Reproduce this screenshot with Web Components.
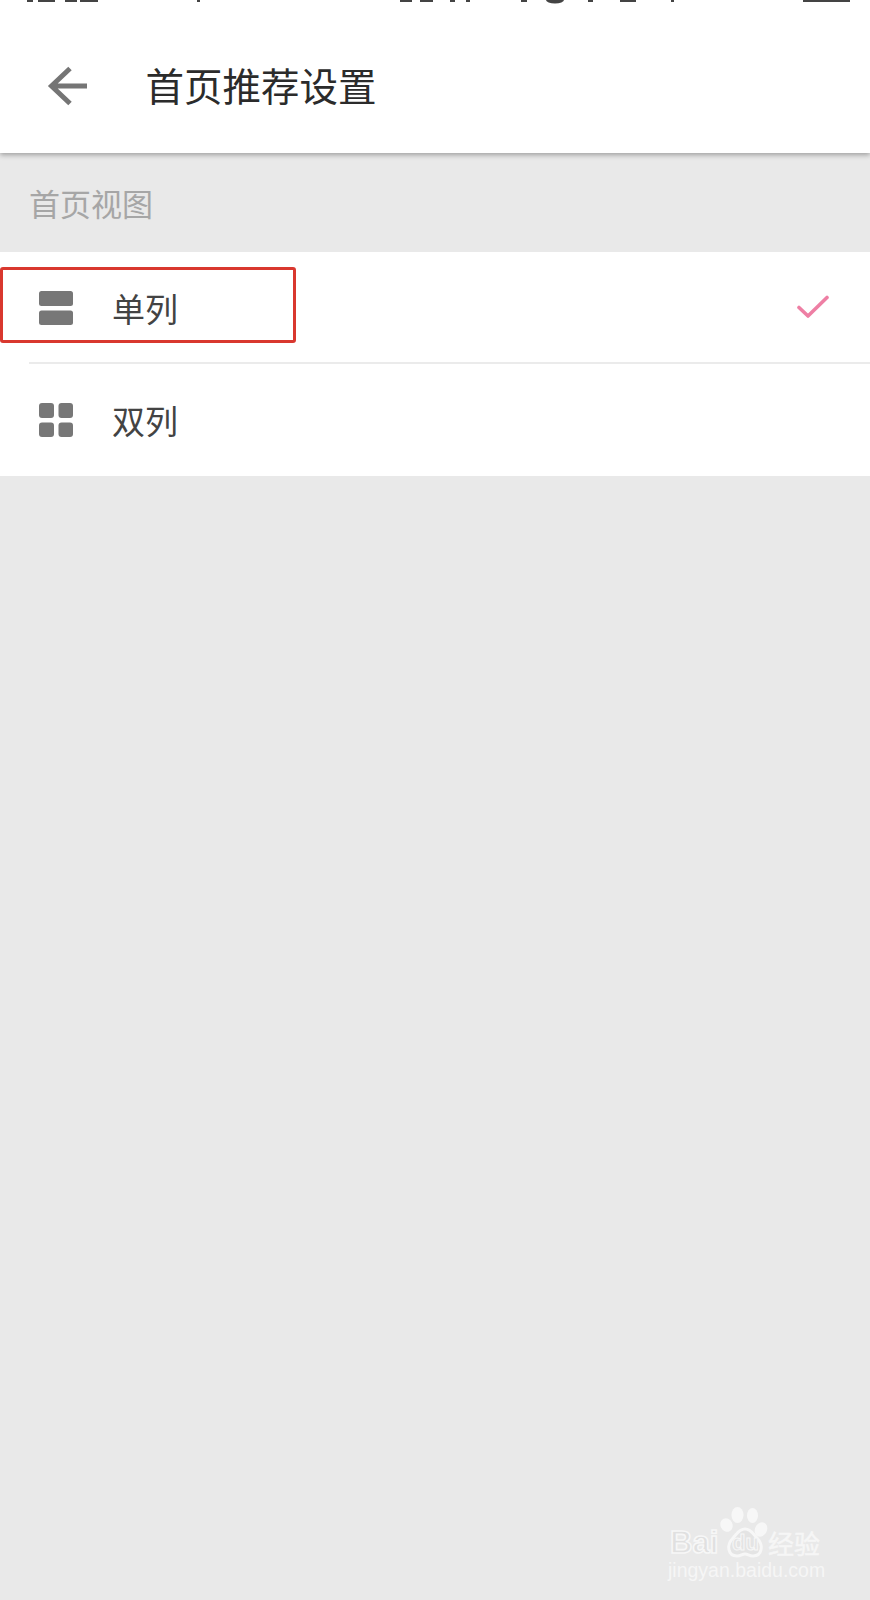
<!DOCTYPE html>
<html lang="zh">
<head>
<meta charset="utf-8">
<title>首页推荐设置</title>
<style>
  html, body { margin: 0; padding: 0; }
  body {
    width: 870px;
    height: 1600px;
    overflow: hidden;
    background: #e9e9e9;
    font-family: "Noto Sans CJK SC", "Noto Sans", sans-serif;
  }
</style>
</head>
<body>
<settings-page>
  <app-bar title="首页推荐设置"></app-bar>
  <section-label>首页视图</section-label>
  <option-list>
    <option-row icon="single" marked checked>单列</option-row>
    <option-row icon="double">双列</option-row>
  </option-list>
</settings-page>
<baidu-mark></baidu-mark>

<script>
class SettingsPage extends HTMLElement {
    constructor() {
        super();
        this.attachShadow({mode: 'open'});
    }
    connectedCallback() {
        this.shadowRoot.innerHTML = `
      <style>
        :host { display: flex; flex-direction: column; }
      </style>
      <slot></slot>
    `;
    }
}

class AppBar extends HTMLElement {
    constructor() {
        super();
        this.attachShadow({mode: 'open'});
    }
    connectedCallback() {
        // the screenshot is cropped through the status bar, only the bottom edge of its glyphs is left
        const scraps = [
            [27, 6], [38, 17], [65, 12], [80, 18], [197, 3],
            [400, 12], [420, 13], [450, 5], [466, 4], [521, 6],
            [588, 5], [620, 16], [671, 3], [803, 47]
        ];
        const rects = scraps.map(([x, w]) => `<rect x="${x}" y="0" width="${w}" height="2"/>`).join('');
        this.shadowRoot.innerHTML = `
      <style>
        :host {
          display: flex;
          align-items: center;
          height: 153px;
          box-sizing: border-box;
          padding: 18px 0 0 47px;
          background: #fff;
          box-shadow: 0 2px 5px rgba(0, 0, 0, 0.32);
          position: relative;
        }
        .status { position: absolute; left: 0; top: 0; width: 870px; height: 4px; fill: #444; }
        .back { width: 42px; height: 40px; flex: none; }
        h1 {
          margin: -3px 0 0 56.5px;
          font-size: 38.5px;
          font-weight: 400;
          color: #2b2b2b;
        }
      </style>
      <svg class="status" viewBox="0 0 870 4">${rects}<ellipse cx="555" cy="0" rx="9" ry="3.5"/></svg>
      <svg class="back" viewBox="0 0 42 40">
        <path d="M23 2.5 L4.5 20 L23 37.5 M4.5 20 H40" fill="none" stroke="#757575" stroke-width="5"/>
      </svg>
      <h1>${this.getAttribute('title')}</h1>
    `;
    }
}

class SectionLabel extends HTMLElement {
    constructor() {
        super();
        this.attachShadow({mode: 'open'});
    }
    connectedCallback() {
        this.shadowRoot.innerHTML = `
      <style>
        :host {
          display: flex;
          align-items: center;
          height: 99px;
          padding-left: 29px;
          font-size: 31px;
          color: #a6a6a6;
        }
      </style>
      <slot></slot>
    `;
    }
}

class OptionList extends HTMLElement {
    constructor() {
        super();
        this.attachShadow({mode: 'open'});
    }
    connectedCallback() {
        this.shadowRoot.innerHTML = `
      <style>
        :host { display: block; background: #fff; }
      </style>
      <slot></slot>
    `;
    }
}

class OptionRow extends HTMLElement {
    constructor() {
        super();
        this.attachShadow({mode: 'open'});
    }
    connectedCallback() {
        const icons = {
            single: `<rect x="0" y="0" width="34" height="15" rx="2.5"/><rect x="0" y="19.5" width="34" height="14.5" rx="2.5"/>`,
            double: `<rect x="0" y="0" width="15" height="15" rx="3"/><rect x="19.5" y="0" width="14.5" height="15" rx="3"/><rect x="0" y="19.5" width="15" height="14.5" rx="3"/><rect x="19.5" y="19.5" width="14.5" height="14.5" rx="3"/>`
        };
        const check = this.hasAttribute('checked') ? `
        <svg class="check" viewBox="0 0 32 24">
          <path d="M2 12.5 L11 21 L30 2.5" fill="none" stroke="#ee7fa4" stroke-width="3.6" stroke-linecap="round" stroke-linejoin="round"/>
        </svg>` : '';
        const mark = this.hasAttribute('marked') ? '<span class="mark"></span>' : '';
        this.shadowRoot.innerHTML = `
      <style>
        :host {
          display: block;
          position: relative;
          height: 112px;
        }
        :host(:not(:last-child))::after {
          content: '';
          position: absolute;
          left: 29px;
          right: 0;
          bottom: 0;
          height: 2px;
          background: #ebebeb;
        }
        .row {
          display: flex;
          align-items: center;
          height: 100%;
          padding: 0 41px 0 39px;
          box-sizing: border-box;
        }
        .icon { width: 34px; height: 34px; flex: none; fill: #777; }
        .label {
          margin-left: 39px;
          font-size: 33px;
          color: #434343;
        }
        .check { width: 32px; height: 24px; margin: -3px 0 0 auto; flex: none; }
        .mark {
          position: absolute;
          left: 0;
          top: 15px;
          width: 296px;
          height: 76px;
          box-sizing: border-box;
          border: 3px solid #d9382f;
          border-radius: 3px;
        }
      </style>
      <div class="row">
        <svg class="icon" viewBox="0 0 34 34">${icons[this.getAttribute('icon')]}</svg>
        <span class="label"><slot></slot></span>
        ${check}
      </div>
      ${mark}
    `;
    }
}

class BaiduMark extends HTMLElement {
    constructor() {
        super();
        this.attachShadow({mode: 'open'});
    }
    connectedCallback() {
        this.shadowRoot.innerHTML = `
      <style>
        :host {
          display: block;
          position: absolute;
          left: 668px;
          top: 1504px;
          width: 170px;
          height: 85px;
          color: #f6f6f6;
          font-family: "Liberation Sans", sans-serif;
        }
        svg { position: absolute; left: 52px; top: 0; width: 50px; height: 56px; fill: #f7f7f7; }
        .bai, .du, .jy, .cn { position: absolute; }
        .bai {
          left: 2px;
          top: 19px;
          font-size: 31px;
          font-weight: 700;
          line-height: 40px;
          color: #e0e0e0;
          -webkit-text-stroke: 1.6px #f7f7f7;
        }
        .du {
          left: 64px;
          top: 29px;
          font-size: 22px;
          font-weight: 700;
          line-height: 20px;
          color: #e4e4e4;
          -webkit-text-stroke: 1px #f7f7f7;
        }
        .cn {
          left: 100px;
          top: 24px;
          font: 400 26px/30px "Noto Sans CJK SC", sans-serif;
          -webkit-text-stroke: 0.5px #f6f6f6;
        }
        .jy { left: 0; top: 54px; font-size: 19.5px; line-height: 24px; white-space: nowrap; }
      </style>
      <svg viewBox="0 0 50 56">
        <ellipse cx="6.5" cy="21" rx="6" ry="7" transform="rotate(-25 6.5 21)"/>
        <ellipse cx="17.5" cy="11" rx="6" ry="8"/>
        <ellipse cx="32.5" cy="11.5" rx="5.5" ry="7.5"/>
        <ellipse cx="41" cy="25.5" rx="6" ry="7.5" transform="rotate(25 41 25.5)"/>
        <path d="M25 25 C31 25 33 30 37 34 C44 41 42 52 33 52 C29 52 28 50 25 50 C22 50 21 52 17 52 C8 52 6 41 13 34 C17 30 19 25 25 25 Z" fill="#e4e4e4" stroke="#f7f7f7" stroke-width="3"/>
      </svg>
      <span class="bai">Bai</span>
      <span class="du">du</span>
      <span class="cn">经验</span>
      <span class="jy">jingyan.baidu.com</span>
    `;
    }
}

customElements.define('settings-page', SettingsPage);
customElements.define('app-bar', AppBar);
customElements.define('section-label', SectionLabel);
customElements.define('option-list', OptionList);
customElements.define('option-row', OptionRow);
customElements.define('baidu-mark', BaiduMark);
</script>
</body>
</html>
